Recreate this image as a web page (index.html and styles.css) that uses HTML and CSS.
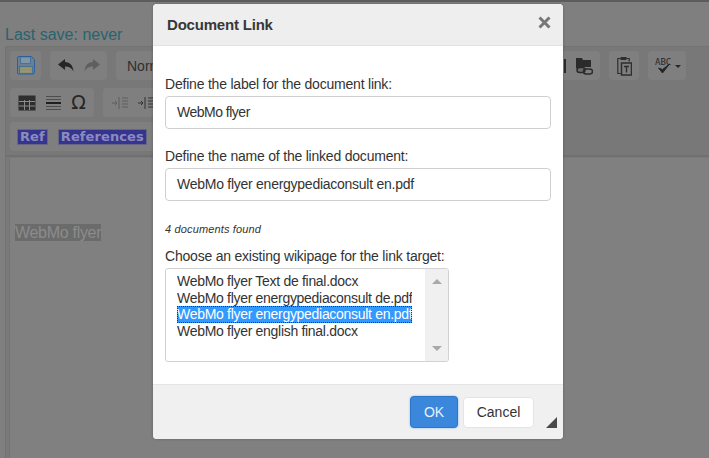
FILE: index.html
```html
<!DOCTYPE html>
<html lang="en">
<head>
<meta charset="utf-8">
<title>Document Link</title>
<link rel="stylesheet" href="styles.css">
</head>
<body>
<div class="page">
  <div class="save-status">Last save: never</div>
  <div class="editor">
    <div class="toolbar-area">
      <div class="row first">
        <div class="group save"><svg width="18" height="19" viewBox="0 0 18 19"><path d="M1.500 0.500h13l3 3v13a1.500 1.500 0 0 1-1.500 1.500h-14.500a1 1 0 0 1-1-1v-15.500a1 1 0 0 1 1-1z" fill="#6a7f93" stroke="#2c6299"/><rect x="3.500" y="1" width="10" height="6.500" fill="#8095a8" stroke="#2c6299" stroke-width=".6"/><rect x="2.500" y="10.500" width="13" height="7" fill="#8f8f7a" stroke="#2c6299" stroke-width=".6"/><path d="M4 13h10M4 15.500h10" stroke="#a3a037"/></svg></div>
        <div class="group undo"><svg width="16" height="13" viewBox="0 0 16 13"><path d="M7 0 0 5.500 7 11V7.500c4 0 7 1.500 8.500 5C15 6.500 12 3 7 3z" fill="#262626"/></svg><svg width="16" height="13" viewBox="0 0 16 13"><path d="M9 0l7 5.500L9 11V7.500c-4 0-7 1.500-8.500 5C1 6.500 4 3 9 3z" fill="#5f5f5f"/></svg></div>
        <div class="group format">Normal</div>
        <div class="spacer"></div>
        <div class="group folder"><span class="sliver"></span><svg width="18" height="20" viewBox="0 0 18 20"><path d="M1 2h6l1 2h8v7H1z" fill="#2b2b2b"/><path d="M1 11.500h7M2 4v8" stroke="#2b2b2b" stroke-width="1.500"/><rect x="2" y="11.500" width="8" height="5" rx="2.500" fill="#6d6d6d" stroke="#2b2b2b" stroke-width="1.500"/><rect x="8.500" y="13" width="9" height="5" rx="2.500" fill="none" stroke="#2b2b2b" stroke-width="1.500"/></svg></div>
        <div class="group clip"><svg width="15" height="20" viewBox="0 0 15 20"><path d="M3.500 2.500H.8v15h3M9.500 2.500h2.700v3" fill="none" stroke="#2e2e2e" stroke-width="1.200"/><rect x="3.500" y="1" width="6" height="3" fill="#2e2e2e"/><rect x="4.500" y="7" width="10" height="12" fill="none" stroke="#2e2e2e" stroke-width="1.500"/><path d="M7 10.500h5M9.500 10.500v6" stroke="#2e2e2e" stroke-width="1.400"/></svg></div>
        <div class="group spell"><svg width="18" height="19" viewBox="0 0 18 19"><text x="0" y="9" class="abc">ABC</text><path d="M3.500 12l4 5 7-9-7 5.500z" fill="#262626" stroke="#262626"/></svg><span class="caret"></span></div>
      </div>
      <div class="row second">
        <div class="group tight"><svg width="18" height="16" viewBox="0 0 18 16"><rect x="0.500" y="0.500" width="17" height="15" fill="#2e2e2e"/><path d="M1 6.500h16M1 11h16M6.500 5v10M11.500 5v10" stroke="#8a8a8a"/></svg><svg width="15" height="16" viewBox="0 0 15 16"><path d="M0 1.500h15M0 4.500h15M0 11.500h15M0 14.500h15" stroke="#4d4d4d"/><path d="M0 8h15" stroke="#1f1f1f" stroke-width="2"/></svg><span class="omega">Ω</span></div>
        <div class="group indent"><svg width="16" height="14" viewBox="0 0 16 14"><path d="M7 1v12M10 2h6M10 5h6M10 8h6M10 11h6" stroke="#5e5e5e"/><path d="M0 7h5M3 5l2 2-2 2" fill="none" stroke="#5e5e5e"/></svg><svg width="16" height="14" viewBox="0 0 16 14"><path d="M7 1v12M10 2h6M10 5h6M10 8h6M10 11h6" stroke="#333"/><path d="M0 7h5M3 5l2 2-2 2" fill="none" stroke="#333"/></svg></div>
      </div>
      <div class="row chips">
        <span class="chip">Ref</span>
        <span class="chip">References</span>
      </div>
    </div>
    <div class="content"><span class="anchor">WebMo flyer</span></div>
  </div>
</div>

<div class="dialog">
  <div class="dialog-head">
    <h1 class="dialog-title">Document Link</h1>
    <svg class="close" width="13" height="13" viewBox="0 0 13 13"><path d="M1.500 1.500l10 10M11.500 1.500l-10 10" stroke="#777" stroke-width="3"/></svg>
  </div>
  <div class="dialog-body">
    <label class="field-label">Define the label for the document link:</label>
    <div class="input short">WebMo flyer</div>
    <label class="field-label second">Define the name of the linked document:</label>
    <div class="input">WebMo flyer energypediaconsult en.pdf</div>
    <p class="found">4 documents found</p>
    <label class="field-label">Choose an existing wikipage for the link target:</label>
    <div class="listbox">
      <ul class="options">
        <li>WebMo flyer Text de final.docx</li>
        <li>WebMo flyer energypediaconsult de.pdf</li>
        <li class="selected">WebMo flyer energypediaconsult en.pdf</li>
        <li>WebMo flyer english final.docx</li>
      </ul>
      <div class="scrollbar"><span class="arrow up"></span><span class="arrow down"></span></div>
    </div>
  </div>
  <div class="dialog-foot">
    <button class="btn primary">OK</button>
    <button class="btn">Cancel</button>
    <span class="grip"></span>
  </div>
</div>
</body>
</html>
```
FILE: styles.css
```css
* { box-sizing: border-box; }
html, body { margin: 0; height: 100%; }
body {
  width: 709px;
  height: 458px;
  overflow: hidden;
  background: #7f7f7f;
  font-family: "Liberation Sans", Arial, sans-serif;
  color: #333;
}
.page {
  height: 458px;
  border-top: 2px solid #5c5c5c;
  padding: 24px 0 0 5px;
  display: flex;
  flex-direction: column;
}
.save-status { font-size: 16px; line-height: 18px; color: #286470; }
.editor {
  flex: 1;
  margin-top: 2px;
  border: 1px solid #737373;
  border-bottom: 0;
  border-right: 0;
  display: flex;
  flex-direction: column;
  background: #7a7a7a;
}
.toolbar-area {
  background: #787878;
  height: 110px;
  padding: 4px 23px 0 4px;
  border-bottom: 2px solid #707070;
  display: flex;
  flex-direction: column;
}
.row { display: flex; gap: 9px; height: 29px; flex: none; }
.row.first { margin-bottom: 8px; }
.row.second { margin-bottom: 5px; }
.group {
  display: flex;
  align-items: center;
  justify-content: center;
  height: 29px;
  background: #7f7f7f;
  border-radius: 4px;
  font-size: 14px;
  color: #2f2f2f;
}
.save { width: 31px; }
.undo { width: 57px; gap: 10px; }
.format { width: 120px; justify-content: flex-start; padding-left: 11px; }
.spacer { flex: 1; }
.folder { width: 43px; justify-content: flex-end; padding-right: 7px; gap: 9px; }
.sliver { width: 2px; height: 14px; background: #2b2b2b; }
.clip { width: 30px; }
.spell { width: 38px; justify-content: flex-start; padding-left: 7px; gap: 2px; }
.abc { font-family: "DejaVu Sans Mono", monospace; font-size: 9px; fill: #262626; }
.caret { width: 0; height: 0; border: 3px solid transparent; border-top: 3px solid #262626; border-bottom: 0; margin-top: 2px; }
.tight { width: 84px; gap: 10px; }
.indent { gap: 10px; width: 60px; }
.omega { font-size: 19px; color: #262626; line-height: 1; font-family: "DejaVu Sans", sans-serif; }
.chips { background: #7f7f7f; align-items: center; gap: 12px; padding-left: 8px; border-radius: 4px; width: 300px; }
.chip {
  font-family: "DejaVu Sans", sans-serif;
  font-size: 13px;
  font-weight: 700;
  background: #353590;
  color: #8c8cbc;
  padding: 0 2px;
  line-height: 14px;
  outline: 1px solid #666680;
  letter-spacing: .1px;
}
.content {
  flex: 1;
  margin: 1px 0 0 3px;
  padding-top: 66px;
  padding-left: 5px;
  background: #808080;
  border-left: 1px solid #747474;
  font-size: 16px;
}
.anchor { background: #6b6b6b; color: #8c8c8c; display: inline-block; line-height: 17px; letter-spacing: -.3px; }

.dialog {
  position: absolute;
  left: 153px;
  top: 4px;
  width: 410px;
  height: 435px;
  background: #fff;
  border-radius: 4px;
  display: flex;
  flex-direction: column;
  overflow: hidden;
  box-shadow: 0 0 3px rgba(0,0,0,.25);
}
.dialog-head {
  height: 42px;
  flex: none;
  background: #eeeeee;
  border-bottom: 1px solid #e2e2e2;
  display: flex;
  align-items: center;
  justify-content: space-between;
  padding: 0 12px 0 14px;
}
.dialog-title { margin: 0; font-size: 15px; font-weight: 700; color: #383838; letter-spacing: -.2px; }
.close { margin-top: -4px; }
.dialog-body { flex: 1; padding: 30px 12px 0; }
.field-label { display: block; font-size: 14px; line-height: 16px; color: #333; letter-spacing: -0.21px; }
.field-label.second { margin-top: 19px; }
.input {
  margin-top: 4px;
  height: 33px;
  border: 1px solid #cfcfcf;
  border-radius: 4px;
  padding: 0 11px;
  font-size: 14px;
  line-height: 31px;
  color: #333;
  letter-spacing: -0.26px;
}
.input.short { letter-spacing: -.5px; }
.found { margin: 22px 0 0; font-size: 11px; line-height: 13px; font-style: italic; color: #333; letter-spacing: .15px; }
.found + .field-label { margin-top: 12px; }
.listbox {
  margin-top: 4px;
  width: 284px;
  height: 94px;
  border: 1px solid #d2d2d2;
  border-radius: 3px;
  display: flex;
  overflow: hidden;
}
.options {
  flex: 1;
  list-style: none;
  margin: 0;
  padding: 4.400px 13px 0 11px;
  font-size: 14px;
  color: #333;
  overflow: hidden;
  letter-spacing: -0.3px;
}
.options li { white-space: nowrap; height: 16.500px; line-height: 16.500px; overflow: hidden; }
.options .selected { background: #3399ff; color: #fff; outline: 1px dotted #163a66; outline-offset: -1px; }
.scrollbar {
  width: 23px;
  flex: none;
  background: #f0f0f0;
  display: flex;
  flex-direction: column;
  justify-content: space-between;
  align-items: center;
  padding: 10px 0;
}
.arrow { width: 0; height: 0; border-left: 5px solid transparent; border-right: 5px solid transparent; }
.arrow.up { border-bottom: 5px solid #a9a9a9; }
.arrow.down { border-top: 5px solid #a9a9a9; }
.dialog-foot {
  height: 55px;
  flex: none;
  background: #f0f0f0;
  border-top: 1px solid #e5e5e5;
  display: flex;
  align-items: center;
  justify-content: flex-end;
  gap: 5px;
  padding: 0 29px 0 0;
  position: relative;
}
.btn {
  height: 31px;
  width: 71px;
  border: 1px solid #e4e4e4;
  border-radius: 4px;
  background: #fff;
  font-family: inherit;
  font-size: 14px;
  color: #333;
  padding: 0;
}
.btn.primary { width: 48px; height: 32px; background: #3a87db; border-color: #2f75c4; color: #e8f2fc; box-shadow: 0 0 2px #6cb0f5; }
.grip {
  position: absolute;
  right: 6px;
  bottom: 11px;
  width: 0;
  height: 0;
  border-left: 11px solid transparent;
  border-bottom: 11px solid #4a4a4a;
}
```
